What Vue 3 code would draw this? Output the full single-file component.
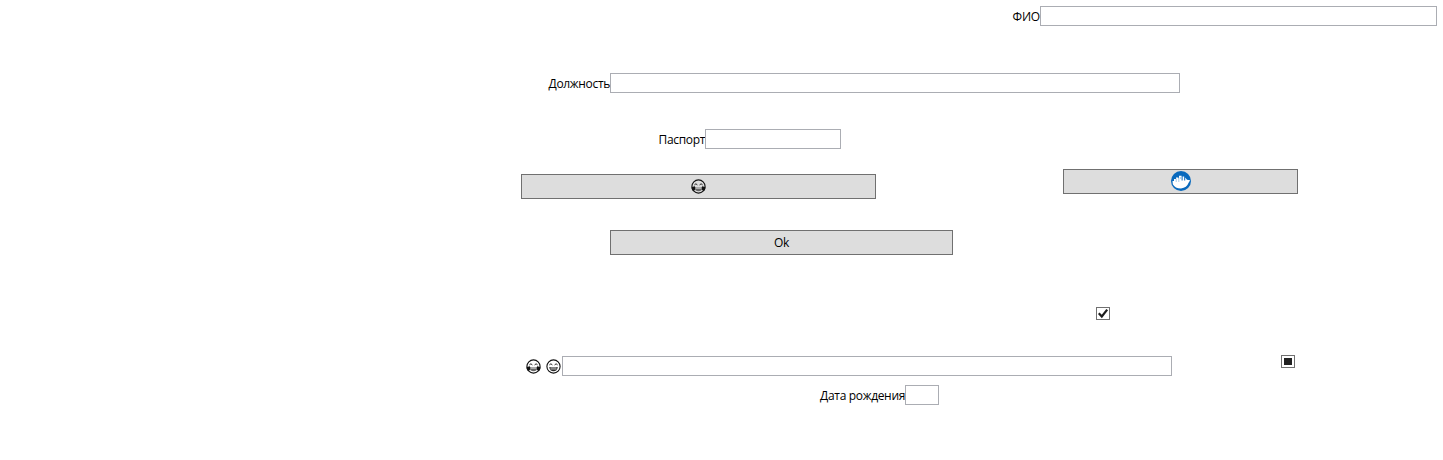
<script setup>
import { h } from 'vue'

// Outlined laughing face; `tears` adds the drops on both cheeks.
const FaceIcon = (props) =>
  h('svg', { viewBox: '0 0 15 15', width: 15, height: 15 }, [
    h('circle', { cx: 7.5, cy: 7.5, r: 6.6, fill: 'none', stroke: '#111', 'stroke-width': 1.1 }),
    h('path', {
      d: 'M3.4 5.9Q4.9 3.7 6.4 5.9M8.6 5.9Q10.1 3.7 11.6 5.9',
      fill: 'none', stroke: '#222', 'stroke-width': 1
    }),
    h('path', { d: 'M3.3 7.9H11.7Q11.2 12.3 7.5 12.3T3.3 7.9Z', fill: props.tears ? '#666' : '#222' }),
    h('path', { d: 'M4.4 9H10.6', stroke: '#fff', 'stroke-width': 0.9 }),
    props.tears
      ? h('path', { d: 'M.6 8L4 7.2Q4.6 11.6 2.5 12Q.5 11.7 .6 8ZM14.4 8L11 7.2Q10.4 11.6 12.5 12Q14.5 11.7 14.4 8Z', fill: '#111' })
      : h('path', { d: 'M4.4 10.6H10.6', stroke: '#bbb', 'stroke-width': 0.6 })
  ])
FaceIcon.props = { tears: Boolean }
</script>

<template>
  <main class="form">
    <div class="row name">
      <label for="name"><span>ФИО</span></label><input id="name" type="text" />
    </div>
    <div class="row position">
      <label for="position"><span>Должность</span></label><input id="position" type="text" />
    </div>
    <div class="row passport">
      <label for="passport"><span>Паспорт</span></label><input id="passport" type="text" />
    </div>
    <div class="row actions">
      <button class="laugh" type="button"><FaceIcon tears /></button>
      <button class="docker" type="button">
        <svg width="20" height="20" viewBox="0 0 20 20">
          <circle cx="10" cy="10" r="10" fill="#0869bd" />
          <path d="M1.5 10H3V8H5V6.6H7.4V7.6H8V4.8H10.6V9.6H11.6V5.4H13.2V9.6H14.2V6.6L16 8.8L19.2 9.2L17.6 11.8Q15.8 17 10 17.4Q4 17.4 1.8 13.2Z" fill="#fff" />
          <path d="M5.2 7.6V11M7.8 7.6V11M9.3 6V8" stroke="#66a5d8" stroke-width=".6" />
        </svg>
      </button>
    </div>
    <div class="row submit"><button type="button">Ok</button></div>
    <div class="row confirm">
      <span class="check" role="checkbox" aria-checked="true">
        <svg width="12" height="11" viewBox="0 0 12 11"><path d="M1.8 5.2L4.8 8.5L10.2 1.6" fill="none" stroke="#1c1c1c" stroke-width="2.2" /></svg>
      </span>
    </div>
    <div class="row mood">
      <label for="mood"><FaceIcon tears /><FaceIcon /></label><input id="mood" type="text" />
      <span class="check" role="checkbox" aria-checked="mixed"><i></i></span>
    </div>
    <div class="row birth">
      <label for="birth"><span>Дата рождения</span></label><input id="birth" type="text" />
    </div>
  </main>
</template>

<style>
body { margin: 0; background: #fff; }
</style>

<style scoped>
.form {
  box-sizing: border-box;
  width: 1443px;
  height: 460px;
  padding-top: 6px;
  overflow: hidden;
  font: 12px/20px "Open Sans", "Noto Sans", sans-serif;
  color: #000;
}
.row { display: flex; align-items: flex-start; height: 20px; }
label { display: flex; flex: none; justify-content: flex-end; height: 20px; padding-top: 1px; box-sizing: border-box; white-space: nowrap; letter-spacing: -0.33px; }
input { box-sizing: border-box; flex: none; height: 20px; margin: 0; padding: 0 2px; border: 1px solid #abadb3; border-radius: 0; background: #fff; outline: 0; font: inherit; }
button { box-sizing: border-box; display: flex; flex: none; align-items: center; justify-content: center; height: 25px; margin: 0; padding: 0; border: 1px solid #707070; border-radius: 0; background: #ddd; color: #000; font: inherit; }
svg { display: block; flex: none; }
.name { padding-left: 1012px; }
.name label { width: 28px; letter-spacing: -0.2px; }
.name input { width: 397px; }
.position { margin-top: 47px; padding-left: 548px; }
.position label { width: 62px; }
.position input { width: 570px; }
.passport { margin-top: 36px; padding-left: 658px; }
.passport label { width: 47px; }
.passport input { width: 136px; }
.actions { height: 30px; margin-top: 20px; padding-left: 521px; }
.laugh { width: 355px; margin-top: 5px; }
.docker { width: 235px; margin-left: 187px; padding: 0 0 1px; }
.submit { height: 25px; margin-top: 31px; padding-left: 610px; }
.submit button { width: 343px; letter-spacing: -0.2px; }
.confirm { height: 13px; margin-top: 52px; padding-left: 1096px; }
.check { box-sizing: border-box; display: flex; flex: none; align-items: center; justify-content: center; width: 14px; height: 13px; border: 1px solid #707070; background: #fff; }
.check i { width: 8px; height: 7px; background: #212121; }
.mood { height: 21px; margin-top: 35px; padding-left: 526px; }
.mood label { width: 36px; gap: 5px; padding: 4px 1px 0 0; height: 21px; }
.mood input { width: 610px; margin-top: 1px; }
.mood .check { margin-left: 109px; }
.birth { margin-top: 9px; padding-left: 820px; }
.birth label { width: 85px; }
.birth input { width: 34px; }
</style>
